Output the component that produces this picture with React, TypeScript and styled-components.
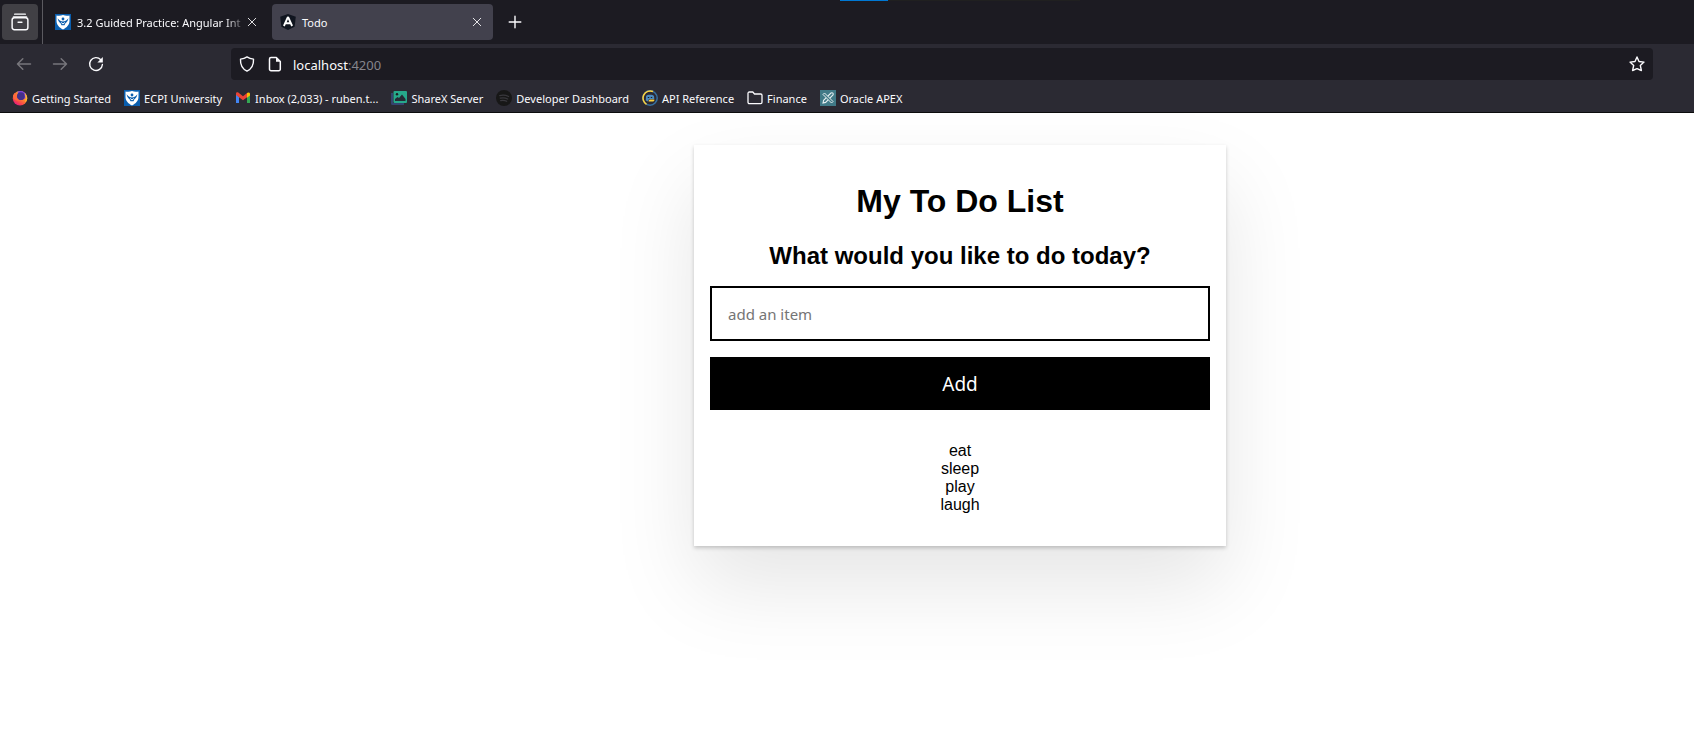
import React, { useState } from "react";
import styled, { createGlobalStyle } from "styled-components";

const uiFont = `"Noto Sans", "Open Sans", sans-serif`;

const GlobalStyle = createGlobalStyle`
  * { box-sizing: border-box; }
  body { margin: 0; background: #fff; color: #000; font-family: "Liberation Sans", Arial, sans-serif; }
  button, input { font-family: ${uiFont}; }
`;

const Page = styled.div`
  min-height: 100vh;
  overflow: hidden;
`;

const Chrome = styled.header`
  position: relative;
  font-family: ${uiFont};
  font-size: 11px;
  color: #fbfbfe;
  background: #2b2a33;
  border-bottom: 1px solid #0c0c0d;
`;

const LoadingStrip = styled.div`
  position: absolute;
  top: 0;
  left: 840px;
  width: 240px;
  height: 1px;
  background: linear-gradient(to right, #0078d4 48px, #202020 48px);
`;

const TabStrip = styled.div`
  display: flex;
  align-items: center;
  height: 44px;
  background: #1c1b22;
`;

const IconButton = styled.button<{ $size?: number; $dim?: boolean; $filled?: boolean }>`
  display: flex;
  align-items: center;
  justify-content: center;
  flex: none;
  width: ${(p) => p.$size ?? 36}px;
  height: ${(p) => p.$size ?? 36}px;
  padding: 0;
  border: 0;
  border-radius: 4px;
  background: ${(p) => (p.$filled ? "#414045" : "transparent")};
  color: ${(p) => (p.$dim ? "#77767c" : "#fbfbfe")};
`;

const HistoryArea = styled.div`
  display: flex;
  align-items: center;
  height: 44px;
  padding: 0 4px 0 2px;
  border-right: 1px solid #5b5a60;
`;

const Tab = styled.div<{ $active?: boolean }>`
  display: flex;
  align-items: center;
  width: 221px;
  height: 36px;
  margin-left: 4px;
  padding: 0 8px;
  border-radius: 4px;
  background: ${(p) => (p.$active ? "#42414d" : "transparent")};
`;

const TabTitle = styled.span<{ $fade?: boolean }>`
  flex: 1;
  min-width: 0;
  margin-left: 6px;
  padding-top: 1px;
  white-space: nowrap;
  line-height: 20px;
  ${(p) => p.$fade && "mask-image: linear-gradient(to right, #000 148px, transparent 170px);"}
`;

const NavBar = styled.div`
  display: flex;
  align-items: center;
  height: 40px;
  padding: 0 41px 0 6px;
`;

const AddressBar = styled.div`
  display: flex;
  align-items: center;
  flex: 1;
  height: 32px;
  margin-left: 117px;
  padding: 0 2px;
  border-radius: 4px;
  background: #1c1b22;
`;

const Address = styled.a`
  flex: 1;
  margin-left: 4px;
  padding-top: 1px;
  font-size: 13px;
  line-height: 20px;
  color: #fbfbfe;
  text-decoration: none;
`;

const Port = styled.span`
  color: #86858c;
`;

const Bookmarks = styled.nav`
  display: flex;
  align-items: center;
  height: 28px;
  padding: 0 12px;
  gap: 13px;
`;

const Bookmark = styled.a`
  display: flex;
  align-items: center;
  gap: 4px;
  line-height: 20px;
  white-space: nowrap;
  color: inherit;
  text-decoration: none;
`;

const BookmarkLabel = styled.span`
  padding-top: 1px;
`;

const Main = styled.main`
  display: flex;
  justify-content: center;
  padding: 32px 0 32px 226px;
`;

const Card = styled.section`
  width: 532px;
  padding: 16px;
  background: #fff;
  text-align: center;
  box-shadow: 0 2px 4px 0 rgba(0, 0, 0, 0.2), 0 40px 80px 0 rgba(0, 0, 0, 0.1);
`;

const Title = styled.h1`
  margin: 22px 0 21px;
  font-size: 32px;
  line-height: 37px;
`;

const Question = styled.label`
  display: block;
  margin-bottom: 15px;
  font-size: 24px;
  font-weight: bold;
  line-height: 30px;
`;

const ItemInput = styled.input`
  display: block;
  width: 100%;
  height: 55px;
  padding: 0 16px;
  border: 2px solid #000;
  border-radius: 0;
  font-size: 15px;
  &::placeholder { color: #757575; opacity: 1; }
`;

const AddButton = styled.button`
  display: block;
  width: 100%;
  height: 53px;
  margin: 16px 0 32px;
  border: 0;
  background: #000;
  color: #fff;
  font-size: 19px;
`;

const List = styled.ul`
  margin: 0 0 16px;
  padding: 0;
  list-style: none;
  font-size: 16px;
  line-height: 18px;
`;

const Glyph = styled.svg`
  flex: none;
`;

const Svg = ({ size = 16, children }: { size?: number; children: React.ReactNode }) => (
  <Glyph width={size} height={size} viewBox="0 0 16 16" fill="none" aria-hidden="true">
    {children}
  </Glyph>
);

const stroke = { stroke: "currentColor", strokeWidth: 1.3, strokeLinecap: "round", strokeLinejoin: "round" } as const;

const HistoryIcon = () => (
  <Svg size={18}>
    <path d="M3.3 1h9.4M2.2 3.5h11.6" {...stroke} />
    <rect x="1" y="4.2" width="14" height="10.6" rx="2" {...stroke} />
    <path d="M6.3 8.3h3.4" {...stroke} />
  </Svg>
);
const CloseIcon = () => (
  <Svg size={10}><path d="M2 2l12 12M14 2l-12 12" {...stroke} strokeWidth={1.4} /></Svg>
);
const PlusIcon = () => <Svg><path d="M8 2.200v11.600M2.200 8h11.600" {...stroke} strokeWidth={1.4} /></Svg>;
const BackIcon = () => <Svg><path d="M14.500 8H1.500M6.800 2.800L1.500 8l5.300 5.200" {...stroke} strokeWidth={1.5} /></Svg>;
const ForwardIcon = () => <Svg><path d="M1.500 8h13M9.200 2.800L14.500 8l-5.300 5.200" {...stroke} strokeWidth={1.5} /></Svg>;
const ReloadIcon = () => (
  <Svg>
    <path d="M12.800 3.800A6.400 6.400 0 1 0 14.400 8.500" {...stroke} strokeWidth={1.4} />
    <path d="M14.800 1v5.400H9.400z" fill="currentColor" />
  </Svg>
);
const ShieldIcon = () => (
  <Svg><path d="M8 .9c2 1.400 4.200 2 6.500 2.200.3 5.500-1.600 9.700-6.500 12C3.100 12.800 1.200 8.600 1.500 3.100 3.800 2.900 6 2.300 8 .9z" {...stroke} strokeWidth={1.4} /></Svg>
);
const PageIcon = () => (
  <Svg>
    <path d="M4 1.500h5.300l4 4v7.700a1.500 1.500 0 0 1-1.500 1.500H4a1.500 1.500 0 0 1-1.500-1.500V3A1.500 1.500 0 0 1 4 1.500z" {...stroke} strokeWidth={1.5} />
    <path d="M9 1.500v4.300h4.300z" fill="currentColor" />
  </Svg>
);
const StarIcon = () => (
  <Svg><path d="M8 1l2 4.500 5 .6-3.700 3.300 1.100 5.100L8 12.600l-4.400 1.900 1.100-5.100L1 6.100l5-.6z" {...stroke} strokeWidth={1.4} /></Svg>
);

const EcpiIcon = () => (
  <Svg>
    <path d="M0 0h16v16H0z" fill="#0a5eae" />
    <path d="M1.500 1.500C4 2.200 6 1.800 8 1c2 .8 4 1.200 6.500.5v5.300c0 4-2.600 6.700-6.500 8.700-3.900-2-6.500-4.700-6.500-8.700z" fill="#fff" />
    <circle cx="8" cy="5" r="1.400" fill="#0a5eae" />
    <path d="M2.600 4.300C4.400 6.600 6.200 7.300 8 7.500c1.800-.2 3.600-.9 5.400-3.200-.6 2.900-1.700 4.200-3 4.900L9.500 11.300h-3l-.9-2.100c-1.300-.7-2.400-2-3-4.900z" fill="#0a5eae" />
    <path d="M6.200 8.500L8 10l1.800-1.500" stroke="#fff" />
  </Svg>
);
const AngularIcon = () => (
  <Svg>
    <path d="M8 0l7.800 2.700-1.200 10L8 16l-6.600-3.300-1.200-10z" fill="#10151f" />
    <path d="M8 2.800L12.100 12M8 2.800L3.900 12M5.500 9.200h5" stroke="#fff" strokeWidth="1.900" />
  </Svg>
);
const FirefoxIcon = () => (
  <Svg>
    <defs>
      <linearGradient id="flame" x1="13" y1="1" x2="4" y2="15" gradientUnits="userSpaceOnUse">
        <stop stopColor="#ffd43b" /><stop offset=".45" stopColor="#ff8a2a" /><stop offset=".8" stopColor="#f6404f" /><stop offset="1" stopColor="#e31587" />
      </linearGradient>
    </defs>
    <circle cx="8" cy="8.300" r="7.200" fill="url(#flame)" />
    <path d="M5 2C9-.5 14.500 1.500 15 7.500L12.800 9 8 4z" fill="#7a3fe0" />
    <circle cx="8.800" cy="6.200" r="3.900" fill="#43308a" />
    <path d="M12.500 3c1.800 1.400 2.700 3 2.700 5.200-.1 1.700-.8 3.200-2 4.400.5-3.300.4-6-.7-9.600z" fill="#ffb52e" />
    <path d="M1 6c.8-2.600 2-3.600 4-3-.6.700-.7 1.500-.5 2.500.2 2.700 1.600 4.200 4 4.800C4.500 11.500 1.200 9.700 1 6z" fill="#ff6a3c" />
  </Svg>
);
const GmailIcon = () => (
  <Svg>
    <path d="M1 4v9h3V7z" fill="#4285f4" />
    <path d="M15 4v9h-3V7z" fill="#34a853" />
    <path d="M1 3.800C1 2.300 2.600 2 3.600 2.800L8 6.300l4.400-3.500V7L8 10.300 1 5z" fill="#ea4335" />
    <path d="M12 3.100c1.400-1.100 3-.6 3 .9v1.500L12 7.700z" fill="#fbbc04" />
  </Svg>
);
const ShareXIcon = () => (
  <Svg>
    <path d="M0 3h2v10h11v2H1.500A1.500 1.500 0 0 1 0 13.500z" fill="#34446f" />
    <rect x="2.500" y="1" width="13.500" height="12" rx="1" fill="#26a98b" />
    <circle cx="6" cy="4.200" r="1.200" fill="#1c1b22" />
    <path d="M4 11V9l2.500-2L8 8l3-3.500L14.500 9v2z" fill="#252b35" />
  </Svg>
);
const SpotifyIcon = () => (
  <Svg>
    <circle cx="8" cy="8" r="8" fill="#171717" />
    <path d="M3.700 5.600c3-.8 6.100-.5 8.900.9M4.200 8.200c2.600-.7 5.200-.4 7.500.8M4.600 10.600c2.200-.5 4.300-.3 6.100.7" stroke="#39383d" strokeWidth="1.200" strokeLinecap="round" />
  </Svg>
);
const ApiIcon = () => (
  <Svg>
    <circle cx="8" cy="8" r="7.200" stroke="#376f9f" strokeWidth="1.500" />
    <path d="M4.500 14.300A7.200 7.200 0 0 1 11 1.500" stroke="#ffd43b" strokeWidth="1.500" />
    <path d="M3.800 10.500l.3-4.500C5 4.300 11 4.300 12 6l.3 3H7l-1 2.500z" fill="#4b8bbe" />
    <path d="M6.500 11.300L7.500 9.500h4.800v1.300l-1 .7H7z" fill="#ffd43b" />
    <path d="M5.800 7.500h1.400M8.800 7.500h1.400" stroke="#1c1b22" strokeWidth="1.200" />
  </Svg>
);
const FolderIcon = () => (
  <Svg><path d="M2.300 2h3.500l1.700 2h6.200A1.300 1.300 0 0 1 15 5.300v7A1.300 1.300 0 0 1 13.700 13.600H2.300A1.300 1.300 0 0 1 1 12.300v-9A1.300 1.300 0 0 1 2.300 2z" {...stroke} /></Svg>
);
const ApexIcon = () => (
  <Svg>
    <path d="M0 0h16v16H0z" fill="#417a87" />
    <path d="M3 13l.6-2.600L11 3c1.500-.8 2.800.5 2 2l-7.400 7.400z" stroke="#e5eef0" strokeWidth="1.100" />
    <path d="M3 4.500L4.500 3 13 11.500 11.500 13z" fill="#417a87" stroke="#e5eef0" strokeWidth="1" />
  </Svg>
);

const bookmarks = [
  { label: "Getting Started", Icon: FirefoxIcon },
  { label: "ECPI University", Icon: EcpiIcon },
  { label: "Inbox (2,033) - ruben.t...", Icon: GmailIcon },
  { label: "ShareX Server", Icon: ShareXIcon },
  { label: "Developer Dashboard", Icon: SpotifyIcon },
  { label: "API Reference", Icon: ApiIcon },
  { label: "Finance", Icon: FolderIcon },
  { label: "Oracle APEX", Icon: ApexIcon },
];

export default function App() {
  const [items, setItems] = useState(["eat", "sleep", "play", "laugh"]);
  const [draft, setDraft] = useState("");

  const addItem = () => {
    if (!draft.trim()) return;
    setItems([...items, draft.trim()]);
    setDraft("");
  };

  return (
    <Page>
      <GlobalStyle />
      <Chrome>
        <TabStrip>
          <HistoryArea>
            <IconButton $filled aria-label="Recent browsing"><HistoryIcon /></IconButton>
          </HistoryArea>
          <Tab>
            <EcpiIcon />
            <TabTitle $fade>3.2 Guided Practice: Angular Int</TabTitle>
            <IconButton $size={16} aria-label="Close tab"><CloseIcon /></IconButton>
          </Tab>
          <Tab $active>
            <AngularIcon />
            <TabTitle>Todo</TabTitle>
            <IconButton $size={16} aria-label="Close tab"><CloseIcon /></IconButton>
          </Tab>
          <IconButton $size={44} aria-label="New tab"><PlusIcon /></IconButton>
        </TabStrip>
        <NavBar>
          <IconButton $dim aria-label="Back"><BackIcon /></IconButton>
          <IconButton $dim aria-label="Forward"><ForwardIcon /></IconButton>
          <IconButton aria-label="Reload"><ReloadIcon /></IconButton>
          <AddressBar>
            <IconButton $size={28} aria-label="Tracking protection"><ShieldIcon /></IconButton>
            <IconButton $size={28} aria-label="Site information"><PageIcon /></IconButton>
            <Address href="#">localhost<Port>:4200</Port></Address>
            <IconButton $size={28} aria-label="Bookmark this page"><StarIcon /></IconButton>
          </AddressBar>
        </NavBar>
        <Bookmarks>
          {bookmarks.map(({ label, Icon }) => (
            <Bookmark href="#" key={label}>
              <Icon />
              <BookmarkLabel>{label}</BookmarkLabel>
            </Bookmark>
          ))}
        </Bookmarks>
        <LoadingStrip />
      </Chrome>
      <Main>
        <Card>
          <Title>My To Do List</Title>
          <Question htmlFor="new-item">What would you like to do today?</Question>
          <ItemInput id="new-item" placeholder="add an item" value={draft} onChange={(e) => setDraft(e.target.value)} />
          <AddButton type="button" onClick={addItem}>Add</AddButton>
          <List>
            {items.map((item, i) => <li key={i}>{item}</li>)}
          </List>
        </Card>
      </Main>
    </Page>
  );
}
